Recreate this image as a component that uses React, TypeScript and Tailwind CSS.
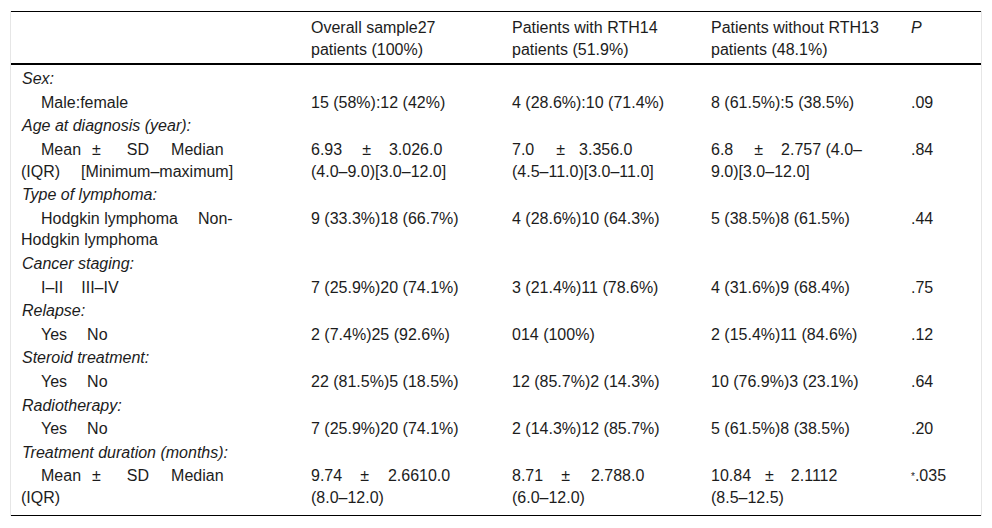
import type { ReactNode } from 'react'

// gap used between items that sit on one line in the label column
function Gap({ c = 'w-[20px]' }: { c?: string }) {
  return <span className={`inline-block ${c}`} />
}

function Pm({ c }: { c: string }) {
  return <span className={`inline-block ${c}`}>±</span>
}

type Row = {
  cat?: string
  sub?: ReactNode
  vals?: ReactNode[]
}

const rows: Row[] = [
  { cat: 'Sex:' },
  {
    sub: 'Male:female',
    vals: ['15 (58%):12 (42%)', '4 (28.6%):10 (71.4%)', '8 (61.5%):5 (38.5%)', '.09'],
  },
  { cat: 'Age at diagnosis (year):' },
  {
    sub: (
      <>
        Mean<Pm c="ml-[11px] mr-[26px]" />SD<Gap c="w-[22px]" />Median
        <br />
        <span className="-ml-[20px]">(IQR)</span>
        <Gap c="w-[21px]" />[Minimum–maximum]
      </>
    ),
    vals: [
      <>
        6.93<Pm c="ml-[20px] mr-[18px]" />3.026.0
        <br />
        (4.0–9.0)[3.0–12.0]
      </>,
      <>
        7.0<Pm c="ml-[22px] mr-[14px]" />3.356.0
        <br />
        (4.5–11.0)[3.0–11.0]
      </>,
      <>
        6.8<Pm c="ml-[21px] mr-[18px]" />2.757 (4.0–
        <br />
        9.0)[3.0–12.0]
      </>,
      '.84',
    ],
  },
  { cat: 'Type of lymphoma:' },
  {
    sub: (
      <>
        Hodgkin lymphoma<Gap />Non-
        <br />
        <span className="-ml-[20px]">Hodgkin lymphoma</span>
      </>
    ),
    vals: ['9 (33.3%)18 (66.7%)', '4 (28.6%)10 (64.3%)', '5 (38.5%)8 (61.5%)', '.44'],
  },
  { cat: 'Cancer staging:' },
  {
    sub: (
      <>
        I–II<Gap c="w-[18px]" />III–IV
      </>
    ),
    vals: ['7 (25.9%)20 (74.1%)', '3 (21.4%)11 (78.6%)', '4 (31.6%)9 (68.4%)', '.75'],
  },
  { cat: 'Relapse:' },
  {
    sub: (
      <>
        Yes<Gap />No
      </>
    ),
    vals: ['2 (7.4%)25 (92.6%)', '014 (100%)', '2 (15.4%)11 (84.6%)', '.12'],
  },
  { cat: 'Steroid treatment:' },
  {
    sub: (
      <>
        Yes<Gap />No
      </>
    ),
    vals: ['22 (81.5%)5 (18.5%)', '12 (85.7%)2 (14.3%)', '10 (76.9%)3 (23.1%)', '.64'],
  },
  { cat: 'Radiotherapy:' },
  {
    sub: (
      <>
        Yes<Gap />No
      </>
    ),
    vals: ['7 (25.9%)20 (74.1%)', '2 (14.3%)12 (85.7%)', '5 (61.5%)8 (38.5%)', '.20'],
  },
  { cat: 'Treatment duration (months):' },
  {
    sub: (
      <>
        Mean<Pm c="ml-[11px] mr-[26px]" />SD<Gap c="w-[22px]" />Median
        <br />
        <span className="-ml-[20px]">(IQR)</span>
      </>
    ),
    vals: [
      <>
        9.74<Pm c="ml-[18px] mr-[19px]" />2.6610.0
        <br />
        (8.0–12.0)
      </>,
      <>
        8.71<Pm c="ml-[18px] mr-[21px]" />2.788.0
        <br />
        (6.0–12.0)
      </>,
      <>
        10.84<Pm c="ml-[14px] mr-[17px]" />2.1112
        <br />
        (8.5–12.5)
      </>,
      <>
        <sup className="relative -top-[1px] text-[10px]">*</sup>.035
      </>,
    ],
  },
]

export default function App() {
  return (
    <div
      className="w-[992px] h-[528px] bg-white pt-[11px] px-[10px] text-[#1c1c1c]"
      style={{ fontFamily: '"Liberation Sans", Arial, sans-serif' }}
    >
      <div className="border-x border-[#e6e6e6]">
        <table className="w-[970px] table-fixed border-collapse text-[16px] leading-[21.6px]">
          <colgroup>
            <col className="w-[290px]" />
            <col className="w-[201px]" />
            <col className="w-[199px]" />
            <col className="w-[200px]" />
            <col className="w-[80px]" />
          </colgroup>
          <thead>
            <tr>
              {[
                '',
                <>Overall sample27<br />patients (100%)</>,
                <>Patients with RTH14<br />patients (51.9%)</>,
                <>Patients without RTH13<br />patients (48.1%)</>,
                <i>P</i>,
              ].map((h, i) => (
                <th
                  key={i}
                  className="border-t border-b-2 border-black pl-[10px] pt-[5px] pb-[3px] text-left align-top font-normal whitespace-nowrap"
                >
                  {h}
                </th>
              ))}
            </tr>
          </thead>
          <tbody>
            {rows.map((r, i) => {
              const first = i === 0
              const last = i === rows.length - 1
              const pad = `${first ? 'pt-[3px]' : 'pt-px'} ${last ? 'pb-[7px] border-b border-black' : 'pb-px'}`
              if (r.cat) {
                return (
                  <tr key={i}>
                    <td className={`pl-[11px] italic align-top ${pad}`}>{r.cat}</td>
                    <td className={pad} />
                    <td className={pad} />
                    <td className={pad} />
                    <td className={pad} />
                  </tr>
                )
              }
              return (
                <tr key={i}>
                  <td className={`pl-[30px] align-top whitespace-nowrap ${pad}`}>{r.sub}</td>
                  {r.vals!.map((v, j) => (
                    <td key={j} className={`pl-[10px] align-top whitespace-nowrap ${pad}`}>
                      {v}
                    </td>
                  ))}
                </tr>
              )
            })}
          </tbody>
        </table>
      </div>
    </div>
  )
}
